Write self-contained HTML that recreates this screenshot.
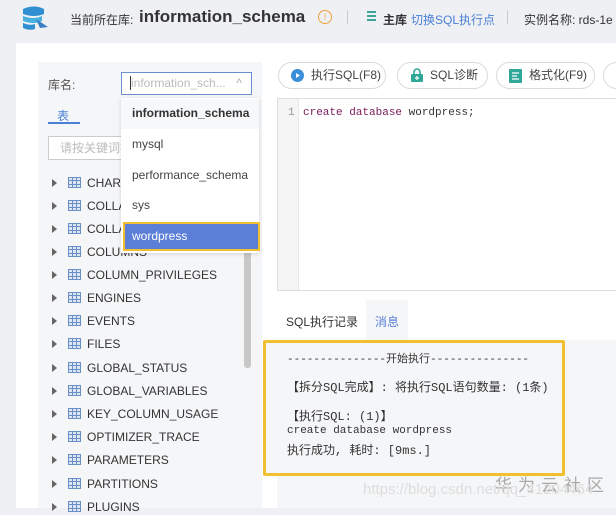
<!DOCTYPE html>
<html><head><meta charset="utf-8"><style>
*{margin:0;padding:0;box-sizing:border-box}
body{width:616px;height:508px;overflow:hidden;background:#eef0f3;font-family:"Liberation Sans","Noto Sans CJK SC",sans-serif;position:relative;color:#333}
.a{position:absolute}
.mono{font-family:"Liberation Mono","Noto Sans CJK SC",monospace}
.row{position:absolute;left:52px;font-size:12px;color:#333;height:16px;line-height:16px}
.row .tri{position:absolute;left:0;top:4px;width:0;height:0;border-left:5px solid #666;border-top:4px solid transparent;border-bottom:4px solid transparent}
.row .ic{position:absolute;left:16px;top:2px;width:13px;height:11px;border:1px solid #6a8fc7;background:linear-gradient(#6a8fc7,#6a8fc7) 0 2px/100% 1px no-repeat,linear-gradient(#6a8fc7,#6a8fc7) 0 6px/100% 1px no-repeat,linear-gradient(#6a8fc7,#6a8fc7) 3px 0/1px 100% no-repeat,linear-gradient(#6a8fc7,#6a8fc7) 7px 0/1px 100% no-repeat,#dde6f3}
.row span{position:absolute;left:35px;white-space:nowrap}
.btn{position:absolute;top:62px;height:27px;border:1px solid #d6d9de;border-radius:14px;background:#fff;font-size:12px;color:#444;line-height:25px;padding-left:32px}
.dd{position:absolute;left:124px;font-size:12px;color:#444;padding-left:8px}
</style></head><body>
<svg class="a" style="left:20px;top:5px" width="30" height="26" viewBox="0 0 30 26"><path d="M3 4 Q14 -1 24 4 L24 9 Q14 13 3 9Z" fill="#2f8fd0"/><path d="M3 11 Q14 15 22 11 L22 16 Q14 20 3 16Z" fill="#46b0e0"/><path d="M3 18 Q10 21 15 19 L15 24 Q9 26 3 23Z" fill="#2f8fd0"/><path d="M16 14 L28 22 L20 23Z" fill="#3a7fc0"/></svg>
<div class="a" style="left:70px;top:11px;font-size:12px;color:#333">当前所在库:</div>
<div class="a" style="left:139px;top:7px;font-size:17px;font-weight:bold;color:#333">information_schema</div>
<div class="a" style="left:318px;top:10px;width:14px;height:14px;border:1px solid #f0a040;border-radius:50%;font-size:9px;color:#f0a040;text-align:center;line-height:12px">!</div>
<div class="a" style="left:347px;top:10px;width:1px;height:14px;background:#ccc"></div>
<div class="a" style="left:367px;top:11px;width:9px;height:11px;background:repeating-linear-gradient(#3aa39a 0 2px,transparent 2px 4px)"></div>
<div class="a" style="left:383px;top:11px;font-size:12px;color:#333;font-weight:bold">主库</div>
<div class="a" style="left:411px;top:11px;font-size:12px;color:#4a7fd6">切换SQL执行点</div>
<div class="a" style="left:507px;top:10px;width:1px;height:14px;background:#ccc"></div>
<div class="a" style="left:524px;top:11px;font-size:12px;color:#333;white-space:nowrap">实例名称: rds-1e</div>
<div class="a" style="left:16px;top:43px;width:600px;height:465px;background:#fff"></div>
<div class="a" style="left:38px;top:62px;width:224px;height:446px;background:#f5f6f8"></div>
<div class="a" style="left:48px;top:76px;font-size:12px;color:#555">库名:</div>
<div class="a" style="left:121px;top:72px;width:131px;height:23px;border:1px solid #6a8fd0;background:#fff;font-size:12px;color:#bbb;line-height:21px;padding-left:9px;white-space:nowrap;overflow:hidden">information_sch...<span style="position:absolute;right:9px;color:#aaa">^</span></div>
<div class="a" style="left:130px;top:76px;width:1px;height:14px;background:#333"></div>
<div class="a" style="left:57px;top:107px;font-size:12px;color:#4a7fd6">表</div>
<div class="a" style="left:48px;top:122px;width:32px;height:2px;background:#4a7fd6"></div>
<div class="a" style="left:48px;top:136px;width:80px;height:24px;border:1px solid #ccc;background:#fff;font-size:12px;color:#bbb;line-height:22px;padding-left:11px;white-space:nowrap;overflow:hidden">请按关键词搜索</div>
<div class="a" style="left:244px;top:240px;width:7px;height:128px;background:#c8c8c8;border-radius:3px"></div>
<div class="row" style="top:175px"><i class="tri"></i><i class="ic"></i><span>CHARACTER_SETS</span></div>
<div class="row" style="top:198px"><i class="tri"></i><i class="ic"></i><span>COLLATIONS</span></div>
<div class="row" style="top:221px"><i class="tri"></i><i class="ic"></i><span>COLLATION_CHARACTER</span></div>
<div class="row" style="top:244px"><i class="tri"></i><i class="ic"></i><span>COLUMNS</span></div>
<div class="row" style="top:267px"><i class="tri"></i><i class="ic"></i><span>COLUMN_PRIVILEGES</span></div>
<div class="row" style="top:290px"><i class="tri"></i><i class="ic"></i><span>ENGINES</span></div>
<div class="row" style="top:313px"><i class="tri"></i><i class="ic"></i><span>EVENTS</span></div>
<div class="row" style="top:336px"><i class="tri"></i><i class="ic"></i><span>FILES</span></div>
<div class="row" style="top:360px"><i class="tri"></i><i class="ic"></i><span>GLOBAL_STATUS</span></div>
<div class="row" style="top:383px"><i class="tri"></i><i class="ic"></i><span>GLOBAL_VARIABLES</span></div>
<div class="row" style="top:406px"><i class="tri"></i><i class="ic"></i><span>KEY_COLUMN_USAGE</span></div>
<div class="row" style="top:429px"><i class="tri"></i><i class="ic"></i><span>OPTIMIZER_TRACE</span></div>
<div class="row" style="top:452px"><i class="tri"></i><i class="ic"></i><span>PARAMETERS</span></div>
<div class="row" style="top:476px"><i class="tri"></i><i class="ic"></i><span>PARTITIONS</span></div>
<div class="row" style="top:499px"><i class="tri"></i><i class="ic"></i><span>PLUGINS</span></div>
<div class="a" style="left:121px;top:98px;width:138px;height:155px;background:#fff;box-shadow:0 1px 4px rgba(0,0,0,.15)"></div>
<div class="a" style="left:121px;top:99px;width:138px;height:30px;background:#f7f8fa"></div>
<div class="dd" style="top:106px;font-weight:bold;color:#333">information_schema</div>
<div class="dd" style="top:137px">mysql</div>
<div class="dd" style="top:168px">performance_schema</div>
<div class="dd" style="top:198px">sys</div>
<div class="a" style="left:123px;top:222px;width:137px;height:29px;background:#5b7fd6;border:2px solid #f0c030"></div>
<div class="dd" style="top:229px;color:#fff">wordpress</div>
<div class="btn" style="left:278px;width:108px">执行SQL(F8)<svg class="a" style="left:12px;top:6px" width="13" height="13"><circle cx="6.5" cy="6.5" r="6.5" fill="#3a8fd8"/><path d="M5 4 L9 6.5 L5 9Z" fill="#fff"/></svg></div>
<div class="btn" style="left:397px;width:91px">SQL诊断<svg class="a" style="left:13px;top:5px" width="12" height="14"><path d="M3 6 V4 A3 3 0 0 1 9 4 V6" stroke="#2fa89a" stroke-width="1.6" fill="none"/><rect x="0" y="6" width="12" height="8" rx="1" fill="#2fa89a"/><path d="M6 8 V12 M4 10 H8" stroke="#fff" stroke-width="1.2"/></svg></div>
<div class="btn" style="left:496px;width:99px">格式化(F9)<svg class="a" style="left:12px;top:6px" width="13" height="14"><rect width="13" height="14" rx="1" fill="#2fa89a"/><path d="M3 4 H10 M3 7 H8 M3 10 H10" stroke="#fff" stroke-width="1.3"/></svg></div>
<div class="btn" style="left:603px;width:30px;padding:0"></div>
<div class="a" style="left:277px;top:98px;width:345px;height:193px;border:1px solid #ddd;background:#fff"></div>
<div class="a" style="left:278px;top:99px;width:21px;height:191px;background:#f5f5f5;border-right:1px solid #e8e8e8"></div>
<div class="a mono" style="left:288px;top:107px;font-size:11px;color:#999">1</div>
<div class="a mono" style="left:303px;top:107px;font-size:11px;color:#333;white-space:nowrap"><span style="color:#7a1a5a">create database</span> wordpress;</div>
<div class="a" style="left:366px;top:300px;width:42px;height:40px;background:#f5f6f8"></div>
<div class="a" style="left:286px;top:313px;font-size:12px;color:#333">SQL执行记录</div>
<div class="a" style="left:375px;top:313px;font-size:12px;color:#5b7fd6">消息</div>
<div class="a" style="left:277px;top:340px;width:339px;height:168px;background:#f5f6f8"></div>
<div class="a" style="left:263px;top:340px;width:302px;height:136px;border:3px solid #f0c030;border-radius:2px;background:#f5f6f8"></div>
<div class="a mono" style="left:287px;top:350px;font-size:11px;color:#333;white-space:nowrap">---------------开始执行---------------</div>
<div class="a mono" style="left:287px;top:378px;font-size:12px;color:#333;white-space:nowrap">【拆分SQL完成】: 将执行SQL语句数量: (1条)</div>
<div class="a mono" style="left:287px;top:407px;font-size:12px;color:#333;white-space:nowrap">【执行SQL: (1)】</div>
<div class="a mono" style="left:287px;top:425px;font-size:11px;color:#333;white-space:nowrap">create database wordpress</div>
<div class="a mono" style="left:287px;top:441px;font-size:12px;color:#333;white-space:nowrap">执行成功, 耗时: [9ms.]</div>
<div class="a" style="left:495px;top:471px;font-size:17px;color:#aaa;letter-spacing:6px;white-space:nowrap">华为云社区</div>
<div class="a" style="left:363px;top:481px;font-size:15px;color:#ddd;white-space:nowrap">https://blog.csdn.net/qq_41204464</div>
</body></html>
